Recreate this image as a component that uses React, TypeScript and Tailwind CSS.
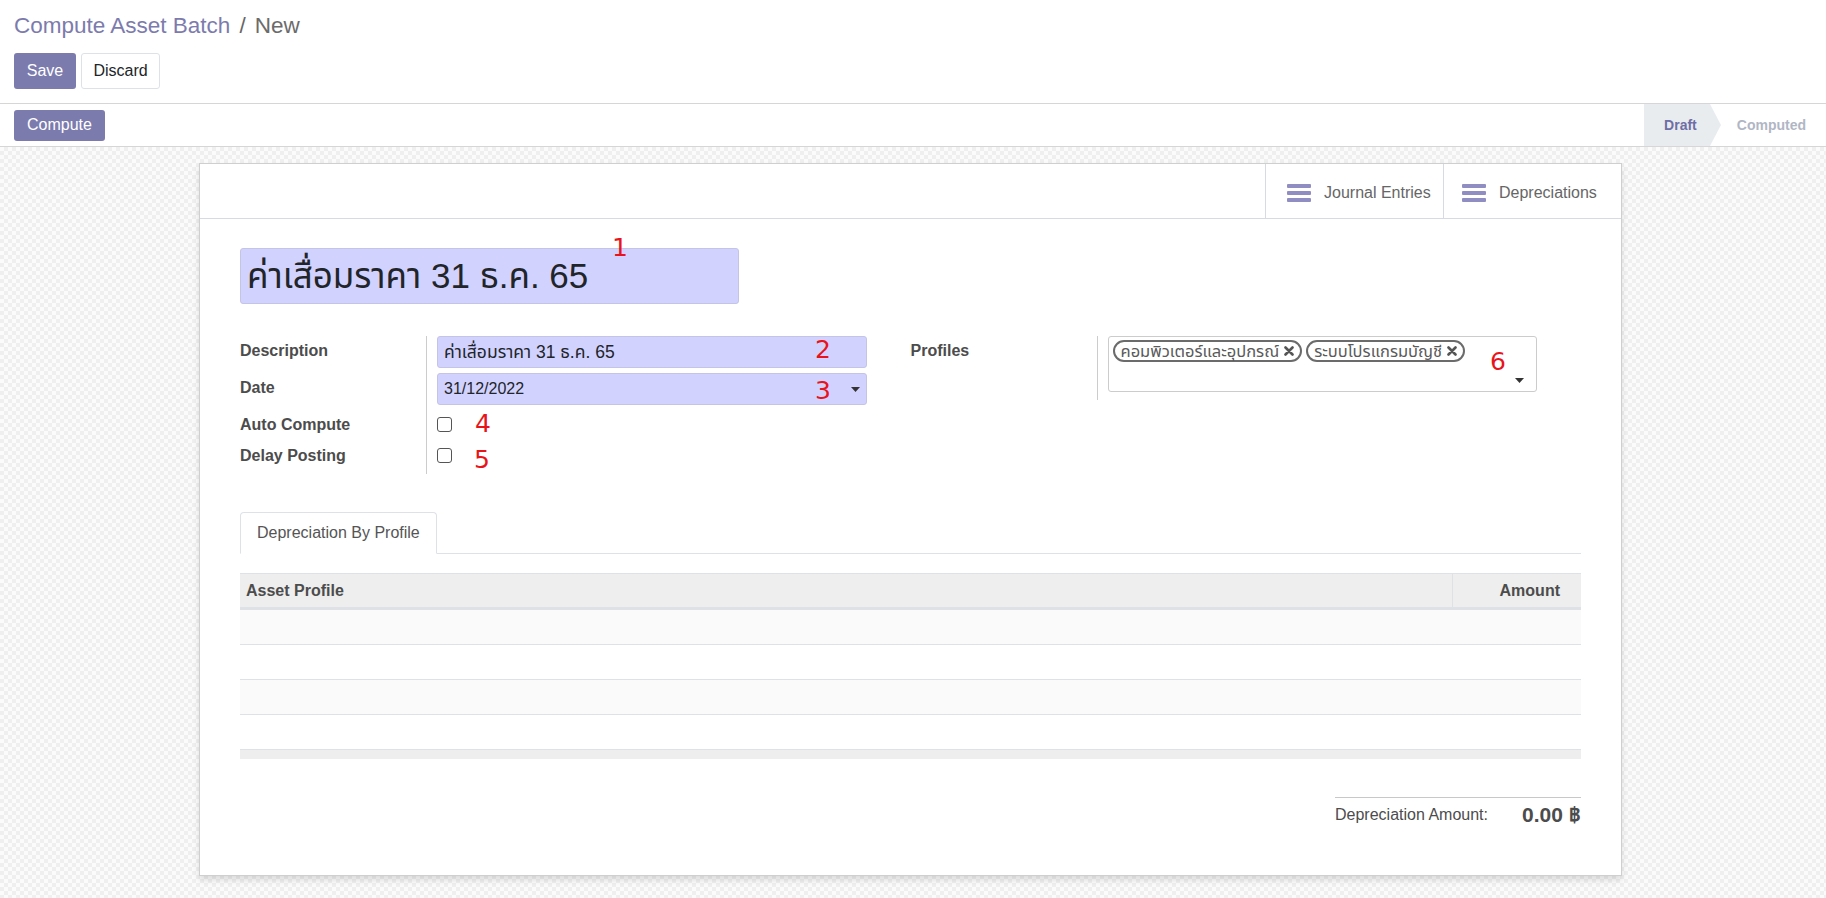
import React from "react";

const font = "font-['Liberation_Sans','Noto_Sans_Thai','Loma','Garuda',sans-serif]";

function Hamburger() {
  return (
    <svg width="24" height="18" viewBox="0 0 24 18" className="shrink-0">
      <rect x="0" y="0" width="24" height="4" rx="1" fill="#8f8dc1" />
      <rect x="0" y="7" width="24" height="4" rx="1" fill="#8f8dc1" />
      <rect x="0" y="14" width="24" height="4" rx="1" fill="#8f8dc1" />
    </svg>
  );
}

function Caret() {
  return (
    <svg width="9" height="5" viewBox="0 0 9 5">
      <path d="M0 0 L9 0 L4.5 5 Z" fill="#333" />
    </svg>
  );
}

function Tag({ label }: { label: string }) {
  return (
    <span className="flex h-[22px] items-center gap-[5px] rounded-full border-2 border-[#6b6b6b] px-[6px] text-[16.5px] leading-none text-[#5a5a5a]">
      {label}
      <svg width="10" height="10" viewBox="0 0 10 10">
        <path d="M1.5 1.5 L8.5 8.5 M8.5 1.5 L1.5 8.5" stroke="#555" strokeWidth="2.6" strokeLinecap="round" />
      </svg>
    </span>
  );
}

function Mark({ n, className }: { n: string; className: string }) {
  return (
    <span className={`absolute font-['DejaVu_Sans',sans-serif] text-[25px] leading-none text-[#e8141c] ${className}`}>{n}</span>
  );
}

export default function App() {
  const rows = [0, 1, 2, 3];
  return (
    <div className={`flex h-[898px] flex-col overflow-hidden bg-white ${font} text-[#4c4c4c]`}>
      {/* control panel */}
      <div className="border-b border-[#d6d6d6] bg-white px-[14px] pb-[14px] pt-[10px]">
        <div className="flex h-[31px] items-center gap-[9px] text-[22.5px]">
          <span className="text-[#7c7bad]">Compute Asset Batch</span>
          <span className="text-[#666]">/</span>
          <span className="text-[#6b6b6b]">New</span>
        </div>
        <div className="mt-[12px] flex gap-[5px] text-[16px]">
          <button className="h-[36px] w-[62px] rounded-[3px] bg-[#7c7bad] text-white">Save</button>
          <button className="h-[36px] w-[79px] rounded-[3px] border border-[#dee2e6] bg-white text-[#212529]">Discard</button>
        </div>
      </div>

      {/* status bar */}
      <div className="flex h-[43px] items-center justify-between border-b border-[#d6d6d6] bg-white pl-[14px]">
        <button className="h-[31px] w-[91px] rounded-[3px] bg-[#7c7bad] text-[16px] text-white">Compute</button>
        <div className="flex h-full items-stretch text-[14px] font-bold">
          <div className="relative flex items-center bg-[#e9ecef] pl-[20px] pr-[13px] text-[#6f6ea6]">
            Draft
            <span className="absolute left-full top-0 h-0 w-0 border-y-[21px] border-l-[11px] border-y-transparent border-l-[#e9ecef]" />
          </div>
          <div className="flex items-center pl-[27px] pr-[20px] text-[#b1b6c4]">Computed</div>
        </div>
      </div>

      {/* sheet background */}
      <div className="flex-1 bg-[image:conic-gradient(#efefef_25%,#fbfbfb_0_50%,#efefef_0_75%,#fbfbfb_0)] bg-[length:8px_8px] pt-[16px]">
        <div className="relative ml-[199px] h-[713px] w-[1423px] border border-[#cfcfcf] bg-white shadow-[0_4px_6px_rgba(0,0,0,0.12)]">
          {/* button box */}
          <div className="flex h-[55px] justify-end border-b border-[#d8dae3]">
            <div className="flex w-[178px] items-center gap-[13px] border-l border-[#d8dae3] pl-[21px] pt-[4px] text-[16px] text-[#666]">
              <Hamburger />
              Journal Entries
            </div>
            <div className="flex w-[178px] items-center gap-[13px] border-l border-[#d8dae3] pl-[18px] pt-[4px] text-[16px] text-[#666]">
              <Hamburger />
              Depreciations
            </div>
          </div>

          <div className="px-[40px]">
            {/* title */}
            <div className="mt-[29px] flex h-[56px] w-[499px] items-center rounded-[3px] border border-[#c4c4e6] bg-[#d2d2ff] pl-[6px] text-[35px] text-[#212529]">
              ค่าเสื่อมราคา 31 ธ.ค. 65
            </div>

            {/* fields */}
            <div className="mt-[32px] grid grid-cols-2">
              <div className="flex pr-[44px]">
                <div className="flex w-[187px] shrink-0 flex-col border-r border-[#ccc] pb-[4px] text-[16px] font-bold">
                  <div className="flex h-[32px] items-center pb-[3px]">Description</div>
                  <div className="mt-[5px] flex h-[32px] items-center pb-[3px]">Date</div>
                  <div className="flex h-[34px] items-center pt-[6px]">Auto Compute</div>
                  <div className="flex h-[31px] items-center pt-[2px]">Delay Posting</div>
                </div>
                <div className="flex flex-1 flex-col pl-[10px] text-[16px] text-[#212529]">
                  <div className="flex h-[32px] items-center rounded-[3px] border border-[#c4c4e6] bg-[#d2d2ff] px-[6px] text-[17.5px]">ค่าเสื่อมราคา 31 ธ.ค. 65</div>
                  <div className="mt-[5px] flex h-[32px] items-center justify-between rounded-[3px] border border-[#c4c4e6] bg-[#d2d2ff] pl-[6px] pr-[6px]">
                    31/12/2022
                    <Caret />
                  </div>
                  <div className="flex h-[34px] items-center pt-[5px]">
                    <span className="h-[15px] w-[15px] rounded-[3px] border-[1.5px] border-[#555] bg-white" />
                  </div>
                  <div className="flex h-[31px] items-center pt-[2px]">
                    <span className="h-[15px] w-[15px] rounded-[3px] border-[1.5px] border-[#555] bg-white" />
                  </div>
                </div>
              </div>
              <div className="flex items-start pr-[44px]">
                <div className="flex h-[64px] w-[187px] shrink-0 border-r border-[#ccc] text-[16px] font-bold">
                  <div className="flex h-[32px] items-center pb-[3px]">Profiles</div>
                </div>
                <div className="ml-[10px] flex h-[56px] flex-1 flex-col rounded-[3px] border border-[#ccc] bg-white px-[4px] pt-[3px]">
                  <div className="flex gap-[4px]">
                    <Tag label="คอมพิวเตอร์และอุปกรณ์" />
                    <Tag label="ระบบโปรแกรมบัญชี" />
                  </div>
                  <div className="mt-auto flex justify-end pb-[8px] pr-[8px]">
                    <Caret />
                  </div>
                </div>
              </div>
            </div>

            {/* tabs */}
            <div className="mt-[38px] flex border-b border-[#dee2e6]">
              <div className="-mb-px flex h-[42px] items-center rounded-t-[4px] border border-b-white border-[#dee2e6] bg-white px-[16px] text-[16px] text-[#555]">
                Depreciation By Profile
              </div>
            </div>

            {/* table */}
            <div className="mt-[19px]">
              <div className="flex h-[37px] items-center border-b-[3px] border-t border-[#dee2e6] bg-[#eeeeee] text-[16px] font-bold">
                <div className="flex-1 pl-[6px]">Asset Profile</div>
                <div className="flex h-full w-[129px] items-center justify-end border-l border-[#dee2e6] pr-[21px]">Amount</div>
              </div>
              {rows.map((r) => (
                <div key={r} className={`h-[35px] border-b border-[#dee2e6] ${r % 2 === 0 ? "bg-[#fafafa]" : "bg-white"}`} />
              ))}
              <div className="h-[9px] bg-[#eeeeee]" />
            </div>

            {/* total */}
            <div className="mt-[38px] flex justify-end">
              <div className="flex w-[246px] items-center justify-between border-t border-[#c8c8c8] pt-[1px]">
                <span className="text-[16px] text-[#4c4c4c]">Depreciation Amount:</span>
                <span className="text-[21px] font-bold text-[#4c4c4c]">0.00 ฿</span>
              </div>
            </div>
          </div>

          {/* annotations */}
          <Mark n="1" className="left-[412px] top-[71px]" />
          <Mark n="2" className="left-[615px] top-[173px]" />
          <Mark n="3" className="left-[615px] top-[214px]" />
          <Mark n="4" className="left-[275px] top-[247px]" />
          <Mark n="5" className="left-[274px] top-[283px]" />
          <Mark n="6" className="left-[1290px] top-[185px]" />
        </div>
      </div>
    </div>
  );
}
